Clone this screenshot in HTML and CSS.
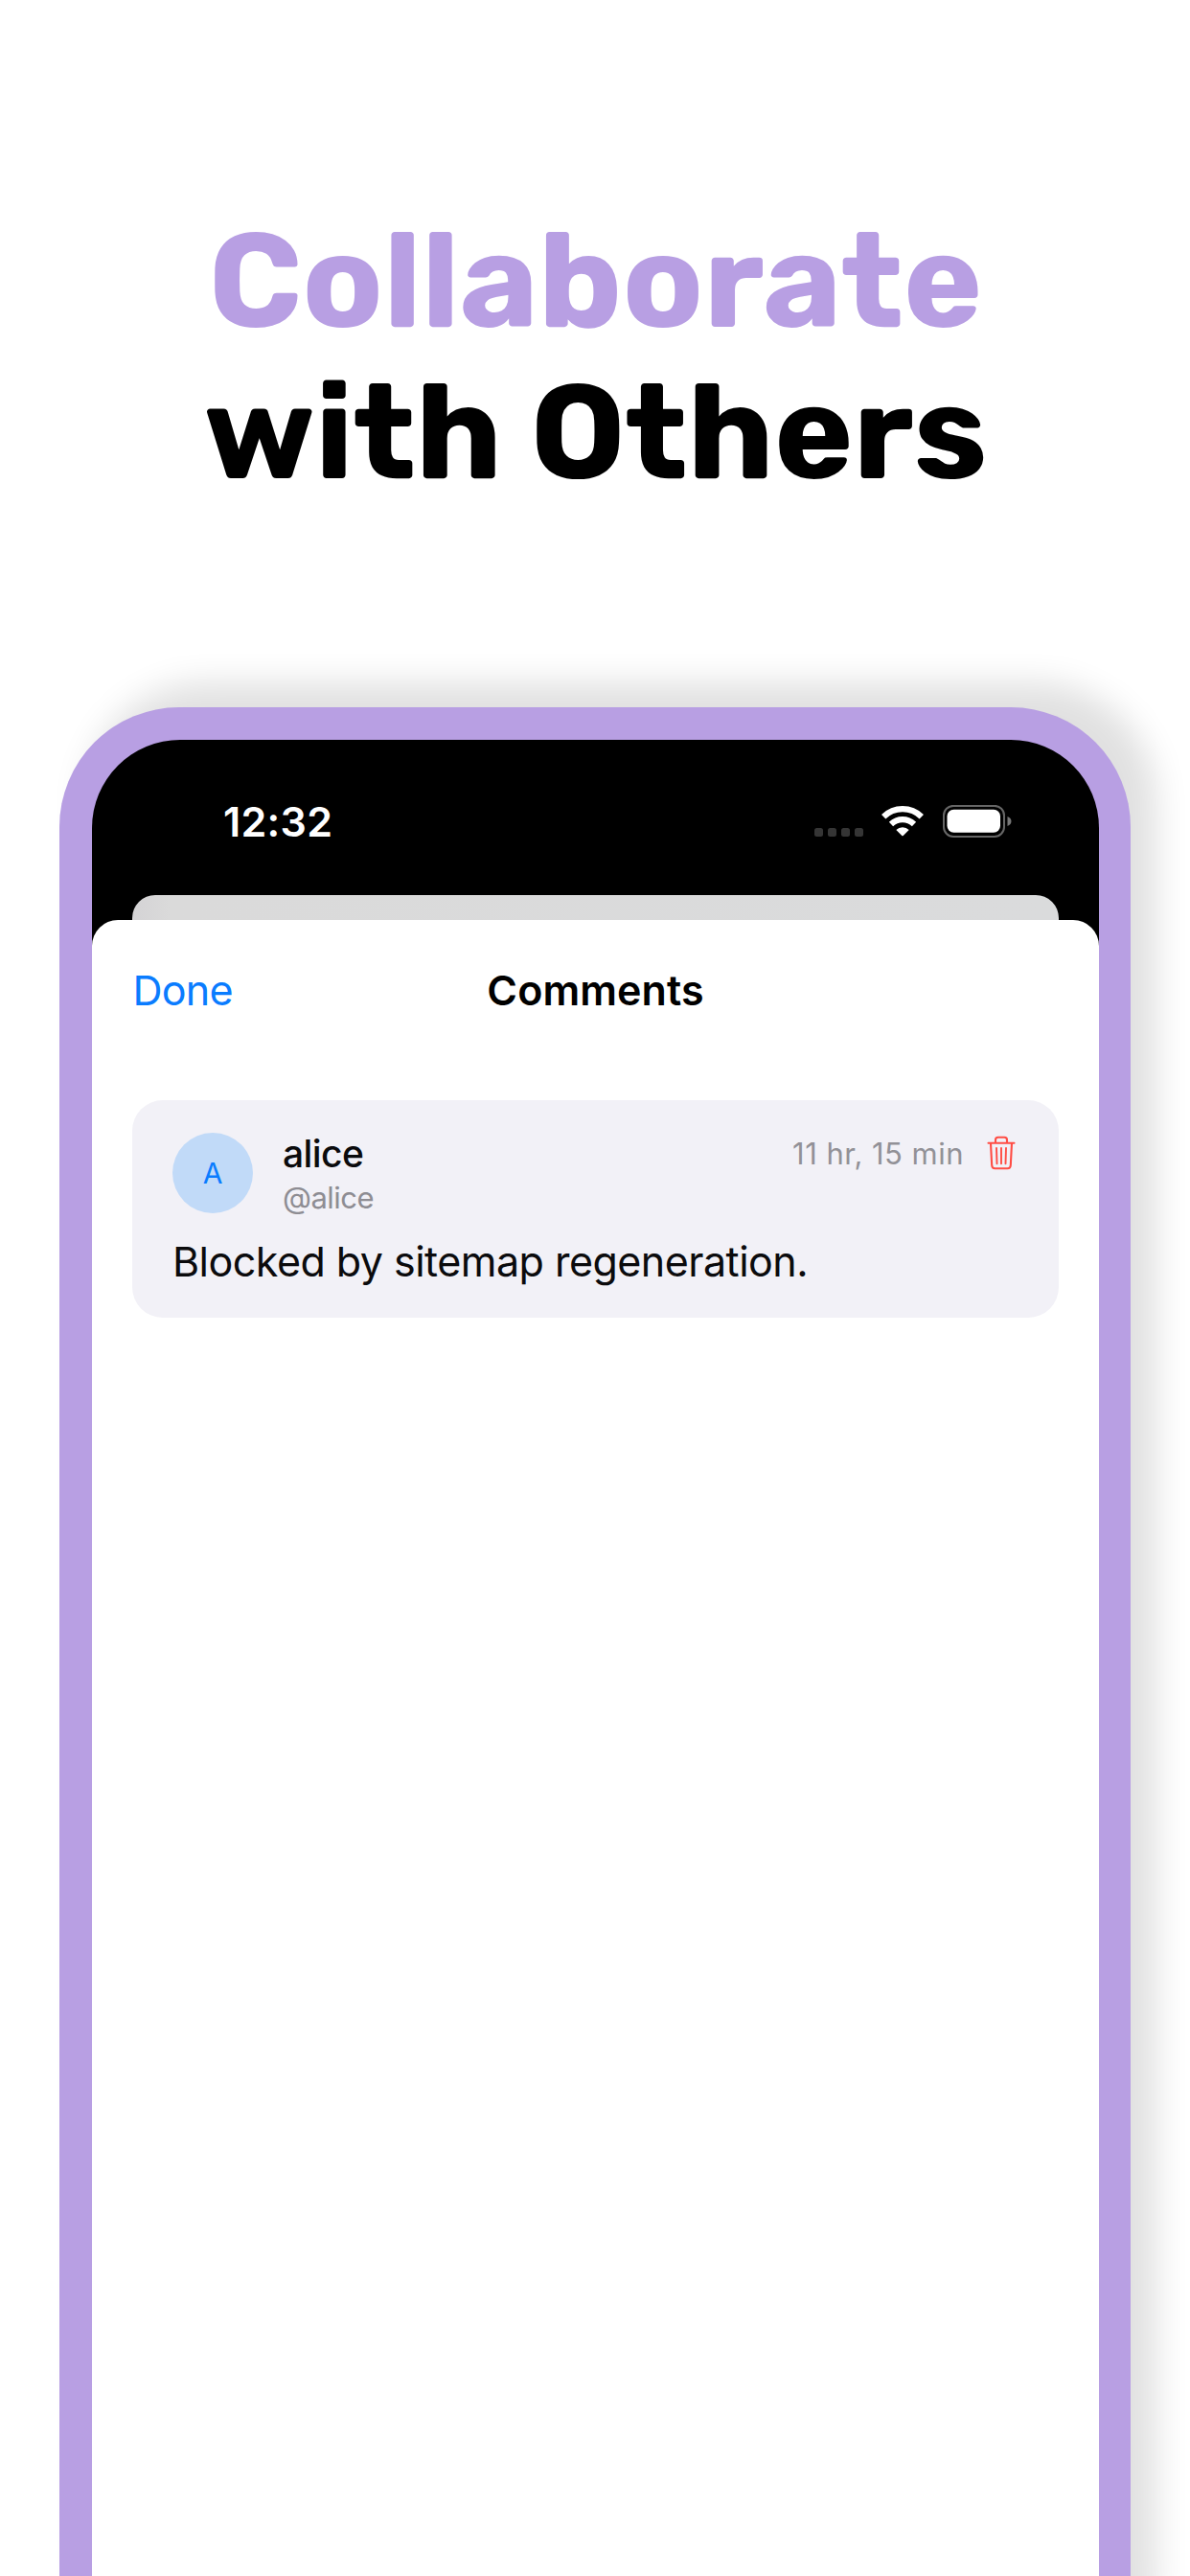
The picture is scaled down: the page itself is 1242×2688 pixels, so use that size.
FILE: index.html
```html
<!DOCTYPE html>
<html lang="en">
<head>
<meta charset="utf-8">
<title>Collaborate with Others</title>
<link rel="stylesheet" href="styles.css">
</head>
<body>
<main class="poster">
  <h1 class="headline"><span class="line accent">Collaborate</span><span class="line second">with Others</span></h1>
  <section class="phone">
    <div class="screen">
      <div class="status">
        <span class="clock">12:32</span>
        <div class="indicators">
          <svg class="cell" viewBox="0 0 52 34" width="52" height="34"><g fill="#353535"><rect x="0" y="23.9" width="9" height="9" rx="2.5"/><rect x="14" y="23.9" width="9" height="9" rx="2.5"/><rect x="28" y="23.9" width="9" height="9" rx="2.5"/><rect x="42" y="23.9" width="9" height="9" rx="2.5"/></g></svg>
          <svg class="wifi" viewBox="0 0 44 34" width="44" height="34"><g fill="none" stroke="#fff" stroke-width="6.2"><path d="M2.2 12.2A28.3 28.3 0 0 1 41.8 12.2"/><path d="M10 20A17.3 17.3 0 0 1 34 20"/></g><path d="M15.3 25.9A9.8 9.8 0 0 1 28.7 25.9L22.7 32Q22 32.7 21.3 32Z" fill="#fff"/></svg>
          <svg class="battery" viewBox="0 0 72 34" width="72" height="34"><rect x="1" y=".9" width="63" height="32" rx="10" fill="none" stroke="#666" stroke-width="2"/><rect x="4.5" y="4.8" width="55.5" height="24" rx="7" fill="#fff"/><path d="M67.5 12q4 1.6 4 5t-4 5z" fill="#777"/></svg>
        </div>
      </div>
      <div class="behind"></div>
      <div class="sheet">
        <header class="bar"><span class="done">Done</span><span class="title">Comments</span></header>
        <article class="card">
          <div class="meta">
            <div class="avatar"><span>A</span></div>
            <div class="who"><span class="name">alice</span><span class="handle">@alice</span></div>
            <span class="time">11 hr, 15 min</span>
            <svg class="trash" viewBox="0 0 30 36" width="30" height="36" fill="none" stroke="#ff4d45" stroke-linecap="round" stroke-linejoin="round"><path stroke-width="2.1" d="M1.5 7.7H28.5M9 7.5V4.4Q9 1.7 11.7 1.7H18.3Q21 1.7 21 4.4V7.5M4 8l1.2 23q.2 3.2 3.3 3.2h13q3.1 0 3.3-3.2L26 8"/><path stroke-width="1.9" d="M10 13l.5 16.3M15 13v16.3M20 13l-.5 16.3"/></svg>
          </div>
          <p class="body">Blocked by sitemap regeneration.</p>
        </article>
      </div>
    </div>
  </section>
</main>
</body>
</html>
```

FILE: styles.css
```css
* { box-sizing: border-box; }
body { margin: 0; background: #fff; font-family: Inter, "Liberation Sans", sans-serif; }
.poster { width: 1242px; height: 2688px; overflow: hidden; padding: 215px 62px 0; }
.headline { margin: 0; height: 523px; padding-left: 1px; font: 700 139px/158px Rubik, Inter, sans-serif; text-align: center; }
.line { display: block; white-space: nowrap; }
.accent { color: #b89fe3; }
.second { color: #000; }
.phone { width: 1118px; height: 2100px; padding: 34px 33px 0 34px; background: #b89fe3; border-radius: 125px; box-shadow: 27px -26px 34px rgba(0,0,0,.12); }
.screen { height: 2066px; background: #000; border-radius: 92px 92px 0 0; overflow: hidden; }
.status { height: 162px; padding: 68px 91px 0 137px; display: flex; justify-content: space-between; align-items: flex-start; }
.clock { color: #fff; font-weight: 600; font-size: 43px; line-height: 34px; white-space: nowrap; letter-spacing: .3px; }
.indicators { display: flex; }
.wifi { margin-left: 18px; }
.battery { margin-left: 20px; }
.behind { height: 26px; margin: 0 42px; background: linear-gradient(90deg, #d4d3d5, #dadada 4%, #dadbdc); border-radius: 24px 24px 0 0; }
.sheet { height: 1878px; padding: 0 42px; background: #fff; border-radius: 27px 27px 0 0; }
.bar { height: 188px; padding-top: 47px; display: grid; grid-template-columns: 1fr auto 1fr; align-items: start; font-size: 43px; line-height: 52px; }
.done { color: #0a7cff; letter-spacing: -.8px; padding-left: .6px; }
.title { font-weight: 600; color: #000; letter-spacing: .1px; }
.card { height: 227px; padding: 34px 42px 0; background: #f2f1f7; border-radius: 32px; }
.meta { display: flex; align-items: flex-start; }
.avatar { width: 84px; height: 84px; border-radius: 50%; background: #c1daf8; color: #0a7cff; display: flex; align-items: center; justify-content: center; font-size: 30px; line-height: 36px; }
.who { margin-left: 31px; display: flex; flex-direction: column; }
.name { font-size: 39px; font-weight: 500; line-height: 44px; height: 46px; color: #0b0b0d; letter-spacing: -.6px; }
.handle { font-size: 31px; line-height: 44px; color: #8e8d93; letter-spacing: -.5px; }
.time { margin: 4px 24px 0 auto; font-size: 31px; line-height: 36px; color: #929197; white-space: nowrap; letter-spacing: .47px; }
.trash { margin-top: 3px; margin-right: 3px; }
.body { margin: 18px 0 0; font-size: 43px; line-height: 52px; color: #0b0b0d; white-space: nowrap; letter-spacing: -.52px; }
```
